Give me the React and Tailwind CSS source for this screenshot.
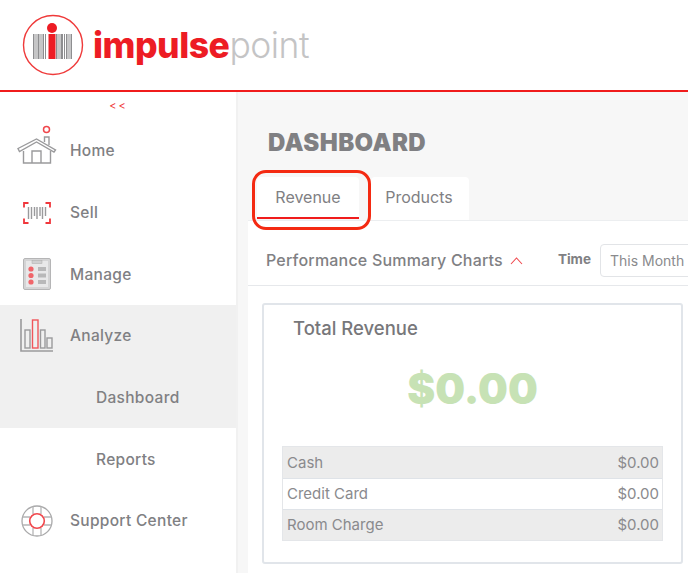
const font = { fontFamily: "Inter, 'Liberation Sans', sans-serif" };

function LogoIcon() {
  // bar offsets measured against the reference barcode
  const bars = [[0, 1.5], [2.5, 1], [4.5, 2], [7.5, 1], [9.5, 1.5], [12, 1], [23, 1.5], [25.5, 1], [27.5, 2.5], [31, 1], [33, 1.5], [35.5, 1], [37.5, 1.5]];
  return (
    <svg width="62" height="62" viewBox="0 0 62 62">
      <circle cx="31" cy="31" r="29.5" fill="#fff" stroke="#ef3a3a" strokeWidth="1.4" />
      {bars.map(([x, w], i) => (
        <rect key={i} x={11 + x} y="20" width={w} height="25" fill="#8e8e90" />
      ))}
      <rect x="26.5" y="20" width="7" height="25" fill="#ed1c24" />
      <circle cx="30" cy="14" r="5" fill="#ed1c24" />
    </svg>
  );
}

function HomeIcon() {
  return (
    <svg width="40" height="40" viewBox="0 0 40 40" fill="none" stroke="#9a9a9c" strokeWidth="1.4" className="overflow-visible">
      <path d="M1 17.5 19.5 8 38.5 19l-1.5 2L19.5 11 2.5 20.5z" />
      <path d="M6.5 20v12h27V20" />
      <path d="M15 32V20h9v12" />
      <path d="M27.5 11V6h4.5v8" />
      <circle cx="29.5" cy="-1.5" r="3" stroke="#f0474c" strokeWidth="1.5" />
    </svg>
  );
}

function SellIcon() {
  return (
    <svg width="28" height="22" viewBox="0 0 28 22" fill="none">
      <path d="M5.5 1H1v4.5M22.5 1H27v4.5M1 16.5V21h4.5M27 16.5V21h-4.5" stroke="#f0373c" strokeWidth="1.8" />
      <path d="M5.5 5v12M8.5 5v12M11.5 5v9M14 5v12M17 5v9M19.5 5v12M22.5 5v9" stroke="#9a9a9c" strokeWidth="1.4" />
    </svg>
  );
}

function ManageIcon() {
  return (
    <svg width="28" height="32" viewBox="0 0 28 32">
      <rect x="0.5" y="0.5" width="27" height="31" rx="1.5" fill="#d4d4d5" stroke="#b5b5b6" />
      <rect x="3" y="3" width="22" height="26" fill="#e8e8e9" />
      <rect x="9" y="2.5" width="10" height="3" fill="#d0d0d1" stroke="#aaa" strokeWidth="0.5" />
      {[11, 17.5, 24].map((y) => (
        <g key={y}>
          <circle cx="8" cy={y} r="2.6" fill="#f0656a" />
          <rect x="15" y={y - 2} width="8" height="4" fill="#b8b8b9" />
        </g>
      ))}
    </svg>
  );
}

function AnalyzeIcon() {
  return (
    <svg width="34" height="36" viewBox="0 0 34 36" fill="none" stroke="#9a9a9c" strokeWidth="1.4">
      <path d="M1 1v32h32" strokeWidth="1.6" />
      <rect x="5" y="12" width="5" height="18" />
      <rect x="12.5" y="2" width="5.5" height="28" stroke="#f0565b" />
      <rect x="20.5" y="12" width="4.5" height="18" />
      <rect x="27" y="20" width="5" height="10" />
    </svg>
  );
}

function SupportIcon() {
  return (
    <svg width="32" height="32" viewBox="0 0 32 32" fill="none">
      <circle cx="16" cy="16" r="15" stroke="#a9a9aa" strokeWidth="1.3" />
      <path d="M12 1.5V9M20 1.5V9M12 23v7.5M20 23v7.5M1.5 12H9M1.5 20H9M23 12h7.5M23 20h7.5" stroke="#b5b5b6" strokeWidth="1.3" />
      <circle cx="16" cy="16" r="7.3" stroke="#f0474c" strokeWidth="1.6" />
    </svg>
  );
}

const navItems = [
  { label: 'Home', icon: <HomeIcon />, active: false },
  { label: 'Sell', icon: <SellIcon />, active: false },
  { label: 'Manage', icon: <ManageIcon />, active: false },
  { label: 'Analyze', icon: <AnalyzeIcon />, active: true },
  { label: 'Dashboard', sub: true, active: true },
  { label: 'Reports', sub: true, active: false },
  { label: 'Support Center', icon: <SupportIcon />, active: false },
];

const rows = [
  { label: 'Cash', value: '$0.00', shaded: true },
  { label: 'Credit Card', value: '$0.00', shaded: false },
  { label: 'Room Charge', value: '$0.00', shaded: true },
];

export default function App() {
  return (
    <div className="relative w-[688px] h-[573px] overflow-hidden bg-[#f7f7f7] text-[#808083]" style={font}>
      {/* Header */}
      <header className="h-[92px] bg-white border-b-2 border-[#f01c1c] flex items-center pl-[22px] gap-[9px]">
        <LogoIcon />
        <div className="flex items-baseline text-[35.5px] leading-none tracking-[-0.5px] mt-[2px]">
          <span className="font-extrabold text-[#ed1c24]">impulse</span>
          <span className="font-light text-[#c4c4c5]">point</span>
        </div>
      </header>

      <div className="flex h-[481px]">
        {/* Sidebar */}
        <aside className="w-[238px] shrink-0 bg-white border-r-2 border-[#f1f1f1] flex flex-col">
          <div className="h-[28px] shrink-0 flex items-center justify-center pl-[1px] text-[11px] text-[#ef3a3a] tracking-[2px]">
            &lt;&lt;
          </div>
          {navItems.map((item) => (
            <div
              key={item.label}
              className={`h-[61.7px] shrink-0 flex items-center text-[15.5px] font-medium text-[#808083] tracking-[0.3px] ${item.active ? 'bg-[#f0f0f0]' : ''} ${item.sub ? 'pl-[96px]' : 'pl-[70px] relative'}`}
            >
              {item.icon && (
                <span className="absolute left-[17px] w-[40px] flex justify-center">{item.icon}</span>
              )}
              {item.label}
            </div>
          ))}
        </aside>

        {/* Main */}
        <main className="flex-1 min-w-0 pl-[10px] flex flex-col">
          <h1 className="pl-[20px] pt-[38px] text-[24px] leading-[26px] font-black text-[#808083] tracking-[0.4px]">DASHBOARD</h1>
          <div className="flex gap-[12px] pl-[9px] mt-[21px] h-[43px] relative">
            <div className="w-[102px] bg-white rounded-t-[4px] border-b-2 border-[#f01c1c] mb-[1px] flex items-center justify-center text-[16px] text-[#808083]">
              Revenue
            </div>
            <div className="w-[98px] bg-white rounded-t-[4px] pb-[3px] pr-[2px] flex items-center justify-center text-[16px] text-[#808083]">
              Products
            </div>
          </div>
          <section className="flex-1 bg-white border-t border-[#eceef0] w-[460px]">
            <div className="h-[65px] border-b border-[#e6e8eb] flex items-center pl-[18px] pt-[13px] whitespace-nowrap">
              <span className="text-[16px] font-medium tracking-[0.2px]">Performance Summary Charts</span>
              <svg className="ml-[7px] mr-[35px] mt-[2px] shrink-0" width="13" height="8" viewBox="0 0 13 8" fill="none" stroke="#f0474c" strokeWidth="1.1">
                <path d="M1 7l5.5-6L12 7" />
              </svg>
              <span className="text-[13.5px] font-bold mr-[9px]">Time</span>
              <div className="w-[110px] shrink-0 h-[33px] mt-[2px] rounded-[4px] border border-[#e2e4e7] flex items-center pl-[9px] text-[14px] text-[#8a8a8d]">
                This Month
              </div>
            </div>
            <div className="ml-[14px] mt-[17px] w-[421px] h-[261px] rounded-[3px] border-2 border-[#e1e5ea] bg-white">
              <div className="pl-[29px] pt-[11px] text-[18.5px] leading-[24px] font-medium text-[#77777a]">Total Revenue</div>
              <div className="mt-[18px] text-center text-[42px] leading-[62px] font-black text-[#c7e2b5]">$0.00</div>
              <div className="mx-[18px] mt-[26px] border border-[#e4e6e9]">
                {rows.map((row, i) => (
                  <div
                    key={row.label}
                    className={`h-[31px] pt-[1px] flex items-center justify-between pl-[4px] pr-[3px] text-[15px] text-[#8a8a8d] ${row.shaded ? 'bg-[#ececec]' : 'bg-white'} ${i > 0 ? 'border-t border-[#dfe3e8]' : ''}`}
                  >
                    <span>{row.label}</span>
                    <span>{row.value}</span>
                  </div>
                ))}
              </div>
            </div>
          </section>
        </main>
      </div>

      {/* Red annotation around the Revenue tab */}
      <div className="absolute left-[252px] top-[170px] w-[119px] h-[60px] rounded-[14px] border-[3px] border-[#f42a12]" />
    </div>
  );
}
